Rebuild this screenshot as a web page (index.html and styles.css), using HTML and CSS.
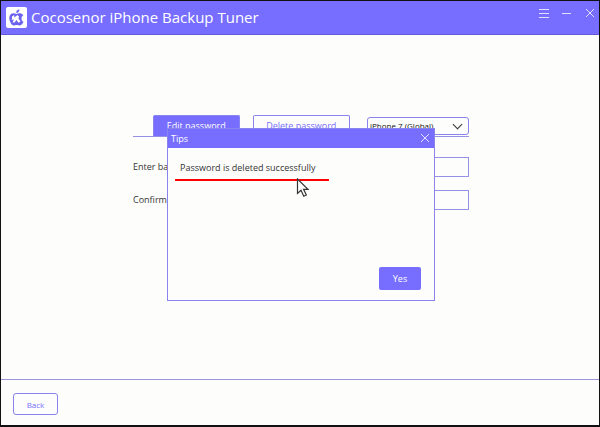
FILE: index.html
```html
<!DOCTYPE html>
<html lang="en">
<head>
    <meta charset="utf-8">
    <title>Cocosenor iPhone Backup Tuner</title>
    <link rel="stylesheet" href="styles.css">
</head>
<body>
    <div class="window">
        <header class="titlebar">
            <svg class="logo" viewBox="0 0 21 21" aria-hidden="true">
                <rect width="21" height="21" rx="2" fill="#fff"/>
                <path d="M10.500 7C8.500 6 6.500 5.800 5 7C2.800 9 3 12.500 4.500 15.500C5.800 18.300 7.300 19 9 18.300C10.300 17.800 11.200 17.800 12.500 18.300C14.500 19 16 18 17.500 14.800C16 14 15.500 13 15.500 11.500C15.500 10 16 9 17.300 8.200C15.500 5.800 12.800 6 10.500 7Z" fill="#6c62ee"/>
                <path d="M10.300 6C10 4 11.300 2.600 13.300 2.300C13.500 4.500 12.200 6 10.300 6Z" fill="#6c62ee"/>
                <path d="M6 9.500L8.300 8V10.500L11.500 8L13 9.500L12.500 11.500L14.500 14.500L12.500 15.800L10.500 13L8.500 15.500H6.500L8 12.500L5.800 13Z" fill="#fff"/>
            </svg>
            <h1>Cocosenor iPhone Backup Tuner</h1>
            <div class="window-buttons">
                <button type="button" aria-label="Menu">
                    <svg viewBox="0 0 10 10"><path d="M0 1.500H10M0 5.500H10M0 9.500H10"/></svg>
                </button>
                <button type="button" aria-label="Minimize">
                    <svg viewBox="0 0 10 10"><path d="M0 5.500H9"/></svg>
                </button>
                <button type="button" aria-label="Close">
                    <svg viewBox="0 0 10 10"><path d="M1 1L9 9M9 1L1 9"/></svg>
                </button>
            </div>
        </header>

        <main>
            <form class="password-form">
                <div class="tabs">
                    <button type="button" class="tab active">Edit password</button>
                    <button type="button" class="tab">Delete password</button>
                    <select aria-label="Device">
                        <option>iPhone 7 (Global)</option>
                    </select>
                </div>
                <div class="row">
                    <label for="password">Enter backup password:</label>
                    <input type="password" id="password">
                </div>
                <div class="row">
                    <label for="confirm">Confirm password:</label>
                    <input type="password" id="confirm">
                </div>
            </form>
        </main>

        <footer>
            <button type="button" class="back">Back</button>
        </footer>

        <div class="overlay">
            <div class="dialog" role="dialog" aria-labelledby="tips">
                <div class="dialog-head">
                    <h2 id="tips">Tips</h2>
                    <button type="button" aria-label="Close tips">
                        <svg viewBox="0 0 10 10"><path d="M1 1L9 9M9 1L1 9"/></svg>
                    </button>
                </div>
                <div class="dialog-body">
                    <p class="message">
                        Password is deleted successfully
                        <svg class="cursor" viewBox="0 0 14 20" aria-hidden="true">
                            <path d="M1.500 1V15.500L5 12.300L7.800 18.200L10.300 17L7.600 11.300H12Z" fill="#fff" stroke="#333" stroke-width="1.200"/>
                        </svg>
                    </p>
                    <button type="button" class="yes">Yes</button>
                </div>
            </div>
        </div>
    </div>
</body>
</html>
```

FILE: styles.css
```css
* {
    box-sizing: border-box;
}
body {
    margin: 0;
    font-family: "Open Sans", "Noto Sans", sans-serif;
    font-size: 9px;
    color: #333;
}
h1, h2, p {
    margin: 0;
    font-weight: normal;
}
button, input, select {
    font: inherit;
    margin: 0;
}
button {
    padding: 0;
    border: none;
    cursor: pointer;
}
.window {
    position: relative;
    display: flex;
    flex-direction: column;
    min-height: 100vh;
    border: 1px solid #111;
    border-bottom-width: 2px;
    background: #fdfdfc;
}

/* title bar */
.titlebar {
    display: flex;
    align-items: center;
    height: 34px;
    padding: 0 4px 0 5px;
    background: #776eff;
    border-bottom: 1px solid #645cd8;
    color: #fff;
}
.logo {
    width: 21px;
    height: 21px;
    margin-right: 4px;
}
h1 {
    flex: 1;
    font-size: 15px;
    line-height: 22px;
    padding-bottom: 2px;
    white-space: nowrap;
}
.window-buttons {
    display: flex;
    gap: 13px;
    align-self: flex-start;
    padding-top: 7px;
}
.window-buttons button, .dialog-head button {
    width: 10px;
    height: 10px;
    background: none;
}
.window-buttons svg, .dialog-head svg {
    display: block;
    width: 10px;
    height: 10px;
    stroke: #e4e1ff;
    fill: none;
}

/* form behind the dialog */
main {
    flex: 1;
    padding: 80px 0 0 2px;
}
.password-form {
    max-width: 336px;
    margin: 0 auto;
}
.tabs {
    position: relative;
    display: flex;
    gap: 13px;
    padding-left: 20px;
    margin-bottom: 20px;
    border-bottom: 1px solid #9690e4;
}
.tab {
    flex: 1 1 86px;
    height: 21px;
    border: 1px solid #8a83ee;
    border-bottom: none;
    border-radius: 2px 2px 0 0;
    background: #fdfdfc;
    color: #776eff;
    line-height: 20px;
    white-space: nowrap;
}
.tab + .tab {
    flex-basis: 97px;
}
.tab.active {
    background: #776eff;
    color: #fff;
}
select {
    flex: 0 0 102px;
    height: 18px;
    margin: 2px 0 0 4px;
    padding: 0 16px 2px 2px;
    appearance: none;
    border: 1px solid #8a83ee;
    border-radius: 3px;
    background: #fdfdfc;
    color: #111;
    font-size: 8px;
}
/* select arrow */
.tabs::after {
    content: "";
    position: absolute;
    top: 6px;
    right: 8px;
    width: 6px;
    height: 6px;
    border: solid #333;
    border-width: 0 1px 1px 0;
    transform: rotate(45deg);
}
.row {
    display: flex;
    align-items: center;
    justify-content: space-between;
    margin-bottom: 13px;
}
.row label {
    padding-bottom: 2px;
    white-space: nowrap;
}
.row input {
    width: 60%;
    height: 20px;
    border: 1px solid #9690e4;
    background: #fdfdfc;
}

footer {
    padding: 13px 12px 10px;
    border-top: 1px solid #9b95dc;
}
.back {
    display: block;
    width: 45px;
    height: 22px;
    border: 1px solid #8a83ee;
    border-radius: 3px;
    background: #fdfdfc;
    color: #776eff;
    font-size: 8px;
}

/* message dialog */
.overlay {
    position: absolute;
    inset: 0;
    display: flex;
    align-items: center;
    justify-content: center;
    padding: 2px 0 0 2px;
}
.dialog {
    width: 268px;
    border: 1px solid #8a83ee;
    background: #fdfdfc;
}
.dialog-head {
    display: flex;
    align-items: center;
    justify-content: space-between;
    height: 19px;
    padding: 0 4px 0 3px;
    background: #776eff;
    color: #fff;
}
h2 {
    font-size: 9px;
}
.dialog-body {
    display: flex;
    flex-direction: column;
    padding: 10px 13px 10px 7px;
}
.message {
    position: relative;
    align-self: flex-start;
    width: 154px;
    padding: 0 0 2px 5px;
    margin-bottom: 86px;
    border-bottom: 2px solid #f00;
    line-height: 19px;
    white-space: nowrap;
}
.cursor {
    position: absolute;
    top: 20px;
    right: 19px;
    width: 14px;
    height: 20px;
}
.yes {
    align-self: flex-end;
    width: 42px;
    height: 23px;
    border-radius: 2px;
    background: #776eff;
    color: #fff;
}
```
